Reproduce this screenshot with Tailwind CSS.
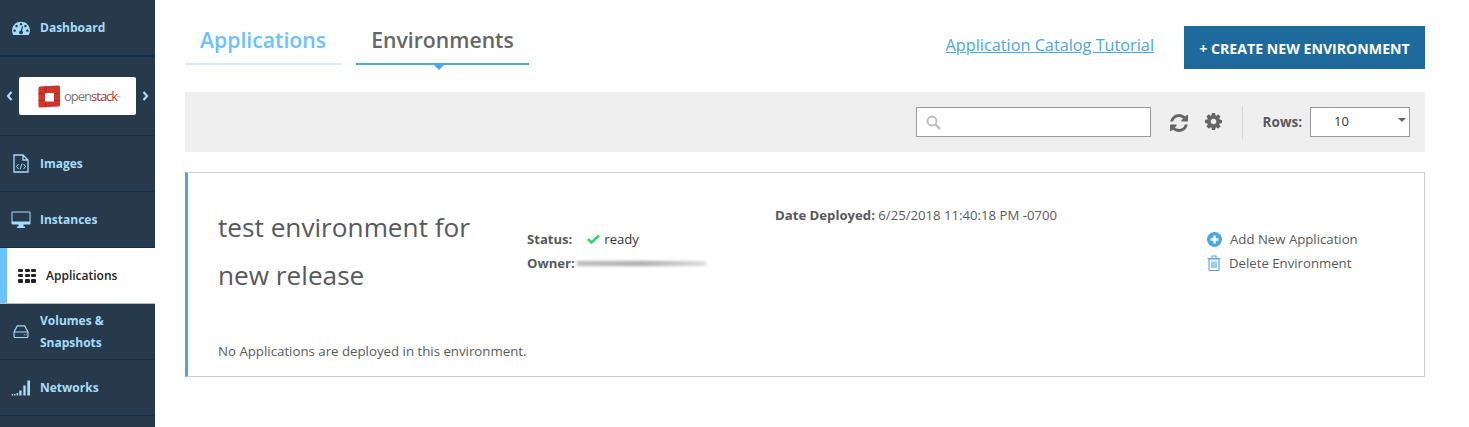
<!DOCTYPE html>
<html>
<head>
<meta charset="utf-8">
<script src="https://cdn.jsdelivr.net/npm/@tailwindcss/browser@4"></script>
</head>
<body class="bg-white font-['Open_Sans',sans-serif] overflow-hidden">
<div class="flex h-[427px] w-[1469px] overflow-hidden">
  <!-- Sidebar -->
  <nav class="w-[155px] shrink-0 bg-[#263a4c] text-[12px] font-bold text-[#a6dcfb]">
    <a class="flex h-[57px] items-center gap-[10px] border-b-2 border-[#15304a] pl-[12px]">
      <svg class="h-[14px] w-[18px]" viewBox="0 192 1792 1408"><path fill="#a6dcfb" d="M384 1152q0-53-37.500-90.500t-90.500-37.500-90.500 37.500-37.500 90.500 37.500 90.500 90.500 37.500 90.500-37.500 37.500-90.500zm192-448q0-53-37.500-90.500t-90.500-37.500-90.500 37.500-37.500 90.500 37.500 90.500 90.500 37.500 90.500-37.500 37.500-90.500zm428 481l101-382q6-26-7.500-48.500t-38.500-29.500-48 6.500-30 39.500l-101 382q-60 5-107 43.500t-63 98.500q-20 77 20 146t117 89 146-20 89-117q16-60-6-117t-72-91zm660-33q0-53-37.500-90.500t-90.500-37.500-90.500 37.500-37.500 90.500 37.500 90.500 90.500 37.500 90.500-37.500 37.500-90.500zm-640-640q0-53-37.500-90.500t-90.500-37.500-90.500 37.500-37.500 90.500 37.500 90.500 90.500 37.500 90.500-37.500 37.500-90.500zm448 192q0-53-37.500-90.500t-90.500-37.500-90.500 37.500-37.500 90.500 37.500 90.500 90.500 37.500 90.500-37.500 37.500-90.500zm320 448q0 261-141 483-19 29-54 29h-1402q-35 0-54-29-141-221-141-483 0-182 71-348t191-286 286-191 348-71 348 71 286 191 191 286 71 348z"/></svg>
      <span>Dashboard</span>
    </a>
    <div class="flex h-[79px] items-center justify-between border-b border-[#15304a] pl-[6px] pr-[6px]">
      <svg class="h-[10px] w-[7px]" viewBox="0 0 7 10"><path fill="none" stroke="#a6dcfb" stroke-width="2.200" d="M5.500 1 2 5l3.500 4"/></svg>
      <div class="flex h-[38px] w-[117px] items-center rounded-[2px] bg-white pl-[19px]">
        <svg class="h-[23px] w-[22px]" viewBox="0 0 22 23"><path fill="#d2342b" fill-rule="evenodd" d="M2 1.500 20.500 .5q1.500 0 1.500 1.500v18q0 1.500-1.500 1.500l-18.500 1Q.5 22.500.5 21V3Q.5 1.500 2 1.500zM7 8v8.500h9V8z"/><path fill="#a32820" d="M.5 8H7v.8H.5zM.5 15H7v.8H.5zM16 8h6v.8h-6zM16 15h6v.8h-6zM7 .9h.8V8H7zM7 16.500h.8v5.400H7z"/></svg>
        <span class="ml-[4px] text-[13px] font-normal leading-none tracking-[-1px] text-[#777]">open<span class="text-[#b5332a]">stack</span><sup class="text-[4px]">™</sup></span>
      </div>
      <svg class="h-[10px] w-[7px]" viewBox="0 0 7 10"><path fill="none" stroke="#a6dcfb" stroke-width="2.200" d="M1.500 1 5 5 1.500 9"/></svg>
    </div>
    <a class="flex h-[56px] items-center gap-[11px] border-b border-[#15304a] pl-[13px]">
      <svg class="h-[19px] w-[16px]" viewBox="0 0 16 19"><path fill="none" stroke="#a6dcfb" stroke-width="1.300" d="M1 1h9l5 5v12H1zM10 1v5h5"/><path fill="none" stroke="#a6dcfb" d="M5.500 10 3.500 12.500 5.500 15M10.500 10l2 2.500-2 2.500M9 9.500 7 15.500"/></svg>
      <span>Images</span>
    </a>
    <a class="flex h-[56px] items-center gap-[9px] border-b border-[#15304a] pl-[11px]">
      <svg class="h-[18px] w-[20px]" viewBox="0 0 20 18"><path fill="#a6dcfb" fill-rule="evenodd" d="M1.500.5h17q1 0 1 1v11q0 1-1 1h-6v2h1.500v1.500h-8V15.500H7.500v-2h-6q-1 0-1-1v-11q0-1 1-1zM1.500 1.500v9h17v-9z"/></svg>
      <span>Instances</span>
    </a>
    <a class="flex h-[56px] items-center border-b border-[#bbb] bg-white">
      <span class="h-full w-[7px] bg-[#6cc1ff]"></span>
      <span class="ml-[11px] grid h-[14px] w-[18px] grid-cols-3 gap-[1.500px]">
        <i class="rounded-[1px] bg-[#222]"></i><i class="rounded-[1px] bg-[#222]"></i><i class="rounded-[1px] bg-[#222]"></i><i class="rounded-[1px] bg-[#222]"></i><i class="rounded-[1px] bg-[#222]"></i><i class="rounded-[1px] bg-[#222]"></i><i class="rounded-[1px] bg-[#222]"></i><i class="rounded-[1px] bg-[#222]"></i><i class="rounded-[1px] bg-[#222]"></i>
      </span>
      <span class="ml-[10px] font-semibold text-[#222]">Applications</span>
    </a>
    <a class="flex h-[56px] items-center gap-[11px] border-b border-[#15304a] pl-[13px]">
      <svg class="h-[13px] w-[16px]" viewBox="0 0 16 14"><path fill="none" stroke="#a6dcfb" stroke-width="1.200" d="M4 1h8l3.500 6.500V12q0 1.500-1.500 1.500H2Q.5 13.500.5 12V7.500zM.5 7.500h15"/><path fill="#a6dcfb" d="M11 10h1v1h-1zM13 10h1v1h-1z"/></svg>
      <span class="leading-[22px]">Volumes &amp;<br>Snapshots</span>
    </a>
    <a class="flex h-[56px] items-center gap-[10px] border-b border-[#15304a] pl-[11px]">
      <svg class="h-[16px] w-[19px]" viewBox="0 0 19 16"><path fill="#a6dcfb" d="M.7 14h1.500v1.500H.7zM3 14h1.500v1.500H3zM5.600 13h1.600v2.500H5.600zM8.300 10.500h2.300v5H8.300zM12.300 5.500h2.400v10h-2.400zM16.300.5H19v15h-2.700z"/></svg>
      <span>Networks</span>
    </a>
  </nav>
  <!-- Main -->
  <main class="ml-[30px] w-[1240px] shrink-0 text-[#58595b]">
    <header class="flex h-[92px] items-start pt-[26px]">
      <a class="h-[39px] w-[156px] border-b-2 border-[#d3edfe] pl-[15px] text-[21.200px] leading-[28px] font-semibold text-[#6cc1ff]">Applications</a>
      <a class="relative ml-[15px] h-[39px] w-[173px] border-b-2 border-[#4ca6e4] text-center text-[21.200px] leading-[28px] font-semibold text-[#666]">
        Environments
        <span class="absolute top-[38px] left-[77px] h-0 w-0 border-x-[6px] border-t-[6px] border-x-transparent border-t-[#4ca6e4]"></span>
      </a>
      <a class="mt-[6px] ml-auto text-[16.250px] leading-[26px] text-[#4ca6e4] underline">Application Catalog Tutorial</a>
      <button class="ml-[30px] h-[43px] w-[241px] bg-[#1f6a9c] pt-[2px] text-center text-[14.150px] font-bold text-white">+ CREATE NEW ENVIRONMENT</button>
    </header>
    <div class="flex h-[60px] items-center bg-[#efefef] pr-[15px]">
      <div class="ml-auto flex h-[30px] w-[235px] items-center border border-[#999] bg-white pl-[9px]">
        <svg class="h-[15px] w-[15px]" viewBox="0 0 15 15"><circle cx="6" cy="6" r="4.500" fill="none" stroke="#bbb" stroke-width="1.800"/><path stroke="#bbb" stroke-width="2.200" d="m9.500 9.500 4.500 4.500"/></svg>
      </div>
      <svg class="mt-[2px] ml-[19px] h-[18px] w-[18px]" viewBox="128 128 1536 1536"><path fill="#666" d="M1639 1056q0 5-1 7-64 268-268 434.500t-478 166.500q-146 0-282.500-55t-243.500-157l-129 129q-19 19-45 19t-45-19-19-45v-448q0-26 19-45t45-19h448q26 0 45 19t19 45-19 45l-137 137q71 66 161 102t187 36q134 0 250-65t186-179q11-17 53-117 8-23 30-23h192q13 0 22.500 9.500t9.500 22.500zm25-800v448q0 26-19 45t-45 19h-448q-26 0-45-19t-19-45 19-45l138-138q-148-137-349-137-134 0-250 65t-186 179q-11 17-53 117-8 23-30 23h-199q-13 0-22.500-9.500t-9.500-22.500v-7q65-268 270-434.500t480-166.500q146 0 284 55.500t245 156.500l130-129q19-19 45-19t45 19 19 45z"/></svg>
      <svg class="mb-[2px] ml-[17px] h-[17px] w-[17px]" viewBox="128 128 1536 1536"><path fill="#666" d="M1152 896q0-106-75-181t-181-75-181 75-75 181 75 181 181 75 181-75 75-181zm512-109v222q0 12-8 23t-20 13l-185 28q-19 54-39 91 35 50 107 138 10 12 10 25t-9 23q-27 37-99 108t-94 71q-12 0-26-9l-138-108q-44 23-91 38-16 136-29 186-7 28-36 28h-222q-14 0-24.500-8.500t-11.500-21.500l-28-184q-49-16-90-37l-141 107q-10 9-25 9-14 0-25-11-126-114-165-168-7-10-7-23 0-12 8-23 15-21 51-66.500t54-70.500q-27-50-41-99l-183-27q-13-2-21-12.500t-8-23.500v-222q0-12 8-23t19-13l186-28q14-46 39-92-40-57-107-138-10-12-10-24 0-10 9-23 26-36 98.500-107.500t94.500-71.500q13 0 26 10l138 107q44-23 91-38 16-136 29-186 7-28 36-28h222q14 0 24.500 8.500t11.500 21.500l28 184q49 16 90 37l142-107q9-9 24-9 13 0 25 10 129 119 165 170 7 8 7 22 0 12-8 23-15 21-51 66.500t-54 70.500q26 50 41 98l183 28q13 2 21 12.500t8 23.500z"/></svg>
      <span class="mx-[20px] h-[33px] w-px bg-[#d5d5d5]"></span>
      <span class="text-[13.500px] font-bold text-[#58595b]">Rows:</span>
      <div class="relative ml-[8px] flex h-[30px] w-[100px] items-center border border-[#999] bg-white pl-[23px] text-[13px] text-[#333]">
        10
        <span class="absolute top-[10px] right-[3px] h-0 w-0 border-x-[4px] border-t-[4px] border-x-transparent border-t-[#666]"></span>
      </div>
    </div>
    <section class="relative mt-[20px] h-[205px] border border-l-[3px] border-[#ccc] border-l-[#4ca6e4] pt-[30px] pl-[30px]">
      <div class="flex">
        <h2 class="w-[309px] text-[26.200px] leading-[48px] font-normal text-[#58595b]">test environment for<br>new release</h2>
        <div class="w-[248px] pt-[24px] text-[13.100px] leading-[24px] font-bold">
          <div class="flex items-center"><span>Status:</span>
            <svg class="ml-[15px] h-[10px] w-[13px]" viewBox="0 0 13 10"><path fill="none" stroke="#3dd26f" stroke-width="2.600" d="m1 5 3.500 3.500L12 1.500"/></svg>
            <span class="ml-[4px] font-normal text-[#333]">ready</span></div>
          <div class="flex items-center"><span>Owner:</span>
            <span class="ml-[2px] h-[5px] w-[129px] bg-gradient-to-r from-[#bbb] via-[#aaa] to-[#ddd] blur-[1.500px]"></span></div>
        </div>
        <div class="pt-[2px] text-[13.170px] leading-[20px]"><b>Date Deployed:</b> 6/25/2018 11:40:18 PM -0700</div>
      </div>
      <p class="mt-[42px] text-[13.250px] leading-[20px]">No Applications are deployed in this environment.</p>
      <div class="absolute top-[54px] left-[1019px] text-[13.200px] leading-[24px]">
        <div class="flex items-center gap-[8px]">
          <svg class="h-[15px] w-[15px]" viewBox="0 0 15 15"><circle cx="7.500" cy="7.500" r="7.500" fill="#4ca6e4"/><path stroke="#fff" stroke-width="2.400" d="M7.500 3.500v8M3.500 7.500h8"/></svg>
          <span>Add New Application</span>
        </div>
        <div class="flex items-center gap-[8px]">
          <svg class="h-[16px] w-[14px]" viewBox="0 0 14 16"><path fill="none" stroke="#4ca6e4" stroke-width="1.100" d="M2 4h10v10.500q0 1-1 1H3q-1 0-1-1zM.5 3.500h13M5 3V1h4v2M5 6.500v6.500M7 6.500v6.500M9 6.500v6.500"/></svg>
          <span>Delete Environment</span>
        </div>
      </div>
    </section>
  </main>
</div>
</body>
</html>
